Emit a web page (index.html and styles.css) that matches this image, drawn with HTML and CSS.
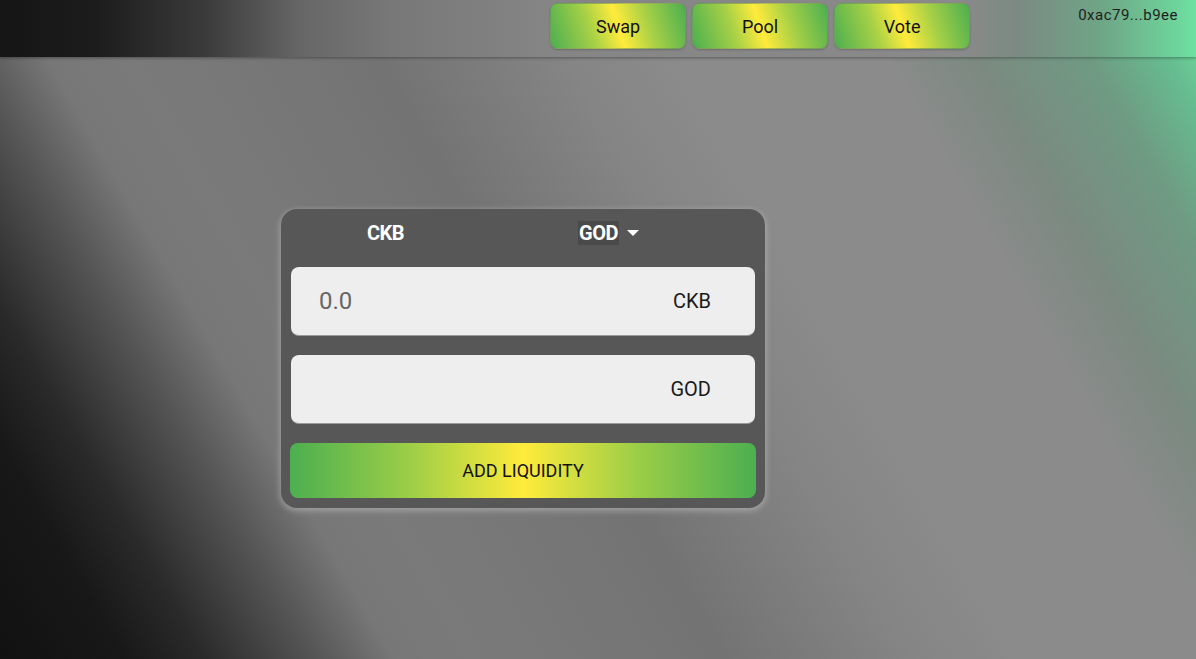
FILE: index.html
```html
<!DOCTYPE html>
<html lang="en">
<head>
<meta charset="utf-8">
<title>Pool</title>
<link rel="stylesheet" href="styles.css">
</head>
<body>
<header class="topbar">
  <nav class="nav">
    <button class="nav-btn">Swap</button>
    <button class="nav-btn">Pool</button>
    <button class="nav-btn">Vote</button>
  </nav>
  <div class="address">0xac79...b9ee</div>
</header>
<main class="main">
  <section class="card">
    <div class="pair">
      <span class="pair-token">CKB</span>
      <span class="pair-select"><span class="pair-select-text">GOD</span><span class="caret"></span></span>
    </div>
    <div class="field">
      <span class="field-value">0.0</span>
      <span class="field-unit">CKB</span>
    </div>
    <div class="field">
      <span class="field-value"></span>
      <span class="field-unit">GOD</span>
    </div>
    <button class="action">ADD LIQUIDITY</button>
  </section>
</main>
</body>
</html>
```
FILE: styles.css
```css
* { box-sizing: border-box; }
html, body { height: 100%; }
body {
  margin: 0;
  font-family: Roboto, "Liberation Sans", sans-serif;
  background: linear-gradient(60deg, #111 0%, #181818 8%, #2a2a2a 13%, #555 20%, #777 25%, #7a7a7a 30%, #767676 40%, #737373 46%, #858585 58%, #8b8b8b 65%, #8b8b8b 78%, #7b8a81 84%, #6f9a82 91%, #66bc90 96%, #6ee0a0 100%);
  overflow: hidden;
}
.topbar {
  height: 57px;
  display: flex;
  justify-content: flex-end;
  align-items: flex-start;
  padding-right: 18px;
  background: linear-gradient(90deg, #151515 0%, #1c1c1c 8%, #3a3a3a 17%, #666 25%, #787878 33%, #858585 46%, #8a8a8a 80%, #7c8a83 85%, #6ea586 92%, #6ee0a0 100%);
  box-shadow: 0 1px 3px rgba(0,0,0,0.35);
  position: relative;
}
.nav {
  display: flex;
  gap: 6px;
  padding-top: 3px;
  margin-right: 108px;
}
.nav-btn {
  width: 136px;
  height: 46px;
  border: 1px solid rgba(120,140,100,0.5);
  border-radius: 8px;
  background: linear-gradient(72deg, #4caf50 0%, #a5d046 30%, #ffeb3b 50%, #a5d046 72%, #4caf50 100%);
  font-family: Roboto, "Liberation Sans", sans-serif;
  font-size: 18px;
  color: #111;
  box-shadow: 0 1px 2px rgba(0,0,0,0.2);
  padding: 0;
}
.address {
  padding-top: 6px;
  font-size: 15px;
  color: #1e1e1e;
  letter-spacing: 0.5px;
}
.main {
  padding: 152px 0 0 281px;
}
.card {
  width: 484px;
  background: #575757;
  border-radius: 16px;
  padding: 0 10px 10px;
  box-shadow: 0 2px 6px 1px rgba(210,210,210,0.45);
  display: flex;
  flex-direction: column;
}
.pair {
  height: 48px;
  margin-bottom: 10px;
  display: flex;
  align-items: center;
  padding-left: 76px;
  gap: 174px;
  color: #fff;
  font-size: 20px;
  font-weight: 700;
}
.pair-token { letter-spacing: -0.5px; }
.pair-select {
  display: flex;
  align-items: center;
  gap: 8px;
}
.pair-select-text {
  background: #4a4a4a;
  padding: 0 1px;
  letter-spacing: -0.5px;
}
.caret {
  width: 0;
  height: 0;
  border-left: 6px solid transparent;
  border-right: 6px solid transparent;
  border-top: 6px solid #fff;
}
.field {
  height: 69px;
  background: #eee;
  border-radius: 8px;
  border-bottom: 1px solid #9a9a9a;
  display: flex;
  align-items: center;
  justify-content: space-between;
  padding: 0 44px 0 28px;
  margin-bottom: 19px;
}
.field-value {
  font-size: 24px;
  color: #666;
}
.field-unit {
  font-size: 20px;
  color: #1a1a1a;
}
.action {
  height: 55px;
  margin: 0 -1px;
  border: none;
  border-radius: 8px;
  background: linear-gradient(90deg, #4caf50 0%, #9acd47 25%, #ffeb3b 50%, #9acd47 75%, #4caf50 100%);
  font-family: Roboto, "Liberation Sans", sans-serif;
  font-size: 18px;
  color: #111;
  padding: 0;
}
```
